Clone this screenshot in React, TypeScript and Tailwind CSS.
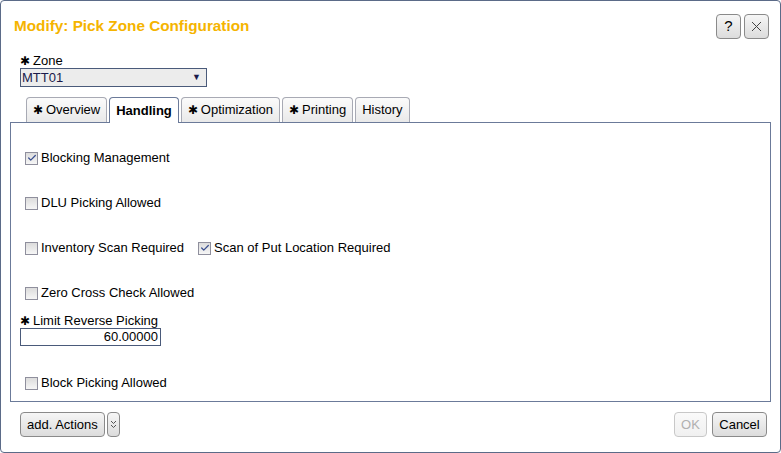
import { Check } from "lucide-react";

const font = { fontFamily: '"Liberation Sans", Arial, sans-serif' };

const Star = () => <span className="text-[12px] mr-[3px] leading-none">✱</span>;

const Box = ({ checked }: { checked?: boolean }) => (
  <span className="w-[13px] h-[13px] border border-[#8f8f9d] bg-gradient-to-b from-[#dcdcdc] to-[#f6f6f6] flex items-center justify-center">
    {checked && <Check className="w-[10px] h-[10px] text-[#3a4f8f]" strokeWidth={3} />}
  </span>
);

const CheckItem = ({ label, checked }: { label: string; checked?: boolean }) => (
  <label className="flex items-center gap-[3px]">
    <Box checked={checked} />
    <span>{label}</span>
  </label>
);

const Tab = ({ label, star, active }: { label: string; star?: boolean; active?: boolean }) => (
  <div
    className={
      active
        ? "h-[26px] px-[6px] border border-b-0 border-[#6b7a99] rounded-t-[4px] bg-white font-bold flex items-center -mb-px relative z-10"
        : "h-[25px] px-[6px] border border-b-0 border-[#a8aab4] rounded-t-[4px] bg-gradient-to-b from-[#fbfbfb] to-[#e9e9e9] flex items-center"
    }
  >
    {star && <Star />}
    {label}
  </div>
);

const Btn = ({ children, disabled, className }: { children: React.ReactNode; disabled?: boolean; className?: string }) => (
  <button
    className={
      "h-[25px] rounded-[4px] border bg-gradient-to-b flex items-center justify-center " +
      (disabled
        ? "border-[#c8c8c8] from-[#fafafa] to-[#f0f0f0] text-[#b0b0b0] "
        : "border-[#8a8a8a] from-[#f6f6f6] to-[#dcdcdc] text-black ") +
      (className ?? "")
    }
  >
    {children}
  </button>
);

export default function App() {
  return (
    <div style={font} className="w-[781px] h-[453px] bg-white text-[13px] text-black">
      <div className="w-full h-full border border-[#5b6b88] rounded-[4px] flex flex-col">
        <div className="flex items-center justify-between pl-[13px] pr-[11px] pt-[13px]">
          <h1 className="text-[15.3px] font-bold text-[#f5b400]">Modify: Pick Zone Configuration</h1>
          <div className="flex gap-[3px]">
            <Btn className="w-[25px] text-[15px]">?</Btn>
            <Btn className="w-[25px]">
              <svg width="11" height="11" viewBox="0 0 11 11">
                <path d="M1 1 L10 10 M10 1 L1 10" stroke="#444" strokeWidth="1" />
              </svg>
            </Btn>
          </div>
        </div>

        <div className="px-[19px] mt-[14px]">
          <div className="leading-[15px] flex items-center">
            <Star />Zone
          </div>
          <div className="w-[187px] h-[19px] border border-[#4a5a7a] bg-[#ececec] flex items-center justify-between pl-[1px] pr-[5px] text-[#1a1a4a]">
            <span>MTT01</span>
            <span className="text-[9px]">▼</span>
          </div>
        </div>

        <div className="flex items-end gap-[2px] pl-[25px] mt-[10px]">
          <Tab label="Overview" star />
          <Tab label="Handling" active />
          <Tab label="Optimization" star />
          <Tab label="Printing" star />
          <Tab label="History" />
        </div>

        <div className="mx-[9px] h-[280px] border border-[#6b7a99] pl-[14px] pt-[26px] flex flex-col">
          <div className="h-[18px] flex items-center"><CheckItem label="Blocking Management" checked /></div>
          <div className="h-[18px] mt-[27px] flex items-center"><CheckItem label="DLU Picking Allowed" /></div>
          <div className="h-[18px] mt-[27px] flex items-center gap-[14px]">
            <CheckItem label="Inventory Scan Required" />
            <CheckItem label="Scan of Put Location Required" checked />
          </div>
          <div className="h-[18px] mt-[27px] flex items-center"><CheckItem label="Zero Cross Check Allowed" /></div>
          <div className="-ml-[5px] mt-[11px] leading-[15px] flex items-center">
            <Star />Limit Reverse Picking
          </div>
          <div className="-ml-[5px] w-[141px] h-[18px] border border-[#4a5a7a] flex items-center justify-end pr-[2px]">
            60.00000
          </div>
          <div className="h-[18px] mt-[28px] flex items-center"><CheckItem label="Block Picking Allowed" /></div>
        </div>

        <div className="flex items-center justify-between pl-[19px] pr-[13px] mt-[10px]">
          <div className="flex gap-[2px]">
            <Btn className="px-[6px]">add. Actions</Btn>
            <Btn className="w-[13px]">
              <svg width="7" height="9" viewBox="0 0 7 9">
                <path d="M1 1 L3.5 3.5 L6 1 M1 5 L3.5 7.5 L6 5" stroke="#555" strokeWidth="1" fill="none" />
              </svg>
            </Btn>
          </div>
          <div className="flex gap-[5px]">
            <Btn disabled className="w-[33px]">OK</Btn>
            <Btn className="w-[55px]">Cancel</Btn>
          </div>
        </div>
      </div>
    </div>
  );
}
